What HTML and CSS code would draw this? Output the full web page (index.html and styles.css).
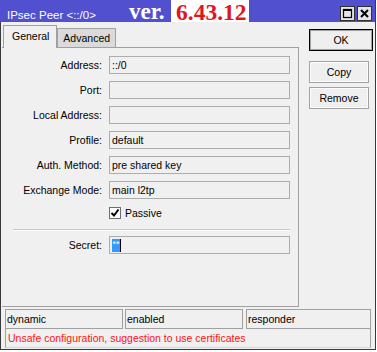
FILE: index.html
```html
<!DOCTYPE html>
<html lang="en">
<head>
  <meta charset="UTF-8">
  <title>IPsec Peer</title>
  <link rel="stylesheet" href="styles.css">
</head>
<body>
  <div class="window">
    <div class="titlebar">
      <span class="title">IPsec Peer &lt;::/0&gt;</span>
      <span class="ver">ver.</span>
      <span class="ver-num">6.43.12</span>
      <div class="controls">
        <span class="ctl">
          <svg width="13" height="13" viewBox="0 0 13 13"><rect x="2.5" y="2.5" width="8" height="8" fill="none" stroke="#000" stroke-width="1.2"/><rect x="2" y="2" width="9" height="2" fill="#000"/></svg>
        </span>
        <span class="ctl">
          <svg width="13" height="13" viewBox="0 0 13 13"><path d="M3 3 L10 10 M10 3 L3 10" stroke="#000" stroke-width="2"/></svg>
        </span>
      </div>
    </div>

    <div class="content">
      <div class="main">
        <div class="tabs">
          <div class="tab active">General</div>
          <div class="tab">Advanced</div>
        </div>
        <div class="panel">
          <div class="row"><label>Address:</label><div class="field">::/0</div></div>
          <div class="row"><label>Port:</label><div class="field"></div></div>
          <div class="row"><label>Local Address:</label><div class="field"></div></div>
          <div class="row"><label>Profile:</label><div class="field">default</div></div>
          <div class="row"><label>Auth. Method:</label><div class="field">pre shared key</div></div>
          <div class="row"><label>Exchange Mode:</label><div class="field">main l2tp</div></div>
          <div class="check-row">
            <span class="box">
              <svg width="10" height="10" viewBox="0 0 10 10"><path d="M1.5 5 L4 7.5 L8.5 1.5" fill="none" stroke="#000" stroke-width="2"/></svg>
            </span>
            <span class="check-label">Passive</span>
          </div>
          <div class="sep"></div>
          <div class="row secret-row"><label>Secret:</label><div class="field secret"><span class="sel">**</span><span class="caret"></span></div></div>
        </div>
      </div>

      <div class="side">
        <button class="btn ok">OK</button>
        <button class="btn">Copy</button>
        <button class="btn">Remove</button>
      </div>
    </div>

    <div class="status">
      <div class="cell c1">dynamic</div>
      <div class="cell c2">enabled</div>
      <div class="cell c3">responder</div>
    </div>
    <div class="message">Unsafe configuration, suggestion to use certificates</div>
  </div>
</body>
</html>
```

FILE: styles.css
```css
body {
  margin: 0;
  background: #ffffff;
  font-family: "Liberation Sans", Arial, sans-serif;
  font-size: 10.5px;
  color: #000000;
}
.window {
  width: 376px;
  height: 350px;
  box-sizing: border-box;
  border: 1px solid #3a3a3a;
  border-top: none;
  background: #f0f0f0;
}

/* barra de titulo */
.titlebar {
  display: flex;
  align-items: flex-start;
  height: 22px;
  margin-left: -1px;
  background: #5151cf;
  color: #ffffff;
}
.title {
  width: 122px;
  padding: 8px 0 0 7px;
  line-height: 14px;
  font-size: 11.5px;
}
.ver {
  width: 42px;
  padding-top: 2px;
  line-height: 20px;
  font-family: "Liberation Serif", "Times New Roman", serif;
  font-weight: bold;
  font-size: 23px;
}
.ver-num {
  height: 22px;
  box-sizing: border-box;
  padding: 2px 2px 0 5px;
  line-height: 20px;
  background: #ffffff;
  color: #e3151c;
  font-family: "Liberation Serif", "Times New Roman", serif;
  font-weight: bold;
  font-size: 23.5px;
}
.controls {
  display: flex;
  gap: 2px;
  margin-left: auto;
  padding: 6px 3px 0 0;
}
.ctl {
  display: flex;
  align-items: center;
  justify-content: center;
  width: 15px;
  height: 15px;
  box-sizing: border-box;
  border: 1px solid #303030;
  background: #e4e4e4;
}

/* cuerpo */
.content {
  display: flex;
}
.main {
  width: 297px;
  margin-left: 1px;
  padding-top: 3px;
}
.tabs {
  display: flex;
  align-items: flex-end;
  height: 22px;
  margin-left: 1px;
}
.tab {
  height: 19px;
  box-sizing: border-box;
  padding: 0 5px;
  border: 1px solid #a0a0a0;
  border-bottom: none;
  background: #dadada;
  line-height: 18px;
}
.tab.active {
  position: relative;
  z-index: 1;
  height: 23px;
  margin-bottom: -1px;
  padding: 0 7px 0 8px;
  background: #f0f0f0;
  line-height: 21px;
}
.panel {
  height: 260px;
  box-sizing: border-box;
  padding-top: 8px;
  border: 1px solid #a0a0a0;
  border-left: none;
}
.row {
  display: flex;
  height: 18px;
}
.row + .row {
  margin-top: 7px;
}
.row label {
  width: 100px;
  margin-right: 7px;
  text-align: right;
  line-height: 18px;
}
.field {
  width: 181px;
  height: 18px;
  box-sizing: border-box;
  padding-left: 2px;
  border: 1px solid #adadad;
  line-height: 16px;
  white-space: nowrap;
}
.check-row {
  display: flex;
  align-items: center;
  height: 12px;
  margin-top: 8px;
  padding-left: 107px;
}
.box {
  display: flex;
  align-items: center;
  justify-content: center;
  width: 12px;
  height: 12px;
  box-sizing: border-box;
  border: 1px solid #6e6e6e;
  background: #ffffff;
}
.check-label {
  margin-left: 4px;
  line-height: 12px;
}
.sep {
  width: 277px;
  margin: 10px 0 0 11px;
  border-top: 1px solid #cacaca;
  border-bottom: 1px solid #ffffff;
}
.secret-row {
  margin-top: 5px;
}
.field.secret {
  display: flex;
  align-items: center;
}
.sel {
  width: 8px;
  height: 13px;
  background: #3399ff;
  color: #ffffff;
  font-size: 9px;
  line-height: 10px;
  text-align: center;
  overflow: hidden;
}
.caret {
  width: 1px;
  height: 13px;
  background: #000000;
}

/* botones */
.side {
  display: flex;
  flex-direction: column;
  align-items: flex-start;
  margin-left: 10px;
  padding-top: 7px;
}
.btn {
  width: 60px;
  height: 22px;
  margin: 0 0 4px 0;
  padding: 0;
  border: 1px solid #a3a3a3;
  box-shadow: inset 0 0 0 1px #fbfbfb;
  background: #efefef;
  font-family: "Liberation Sans", Arial, sans-serif;
  font-size: 10.5px;
  color: #000000;
}
.btn.ok {
  width: 64px;
  margin-bottom: 10px;
  border-color: #000000;
  box-shadow: inset 0 0 0 1px #a3a3a3;
}

/* barra de estado */
.status {
  display: flex;
  margin: 2px 0 0 4px;
}
.cell {
  height: 20px;
  box-sizing: border-box;
  padding-left: 1px;
  border: 1px solid #a0a0a0;
  line-height: 18px;
}
.c1 { width: 118px; }
.c2 { width: 118px; margin-left: 2px; }
.c3 { width: 125px; margin-left: 3px; }
.message {
  width: 366px;
  height: 19px;
  box-sizing: border-box;
  margin-left: 4px;
  padding-left: 2px;
  border: 1px solid #a0a0a0;
  border-top: none;
  border-bottom-color: #d8d8d8;
  line-height: 18px;
  color: #ff1414;
}
```
